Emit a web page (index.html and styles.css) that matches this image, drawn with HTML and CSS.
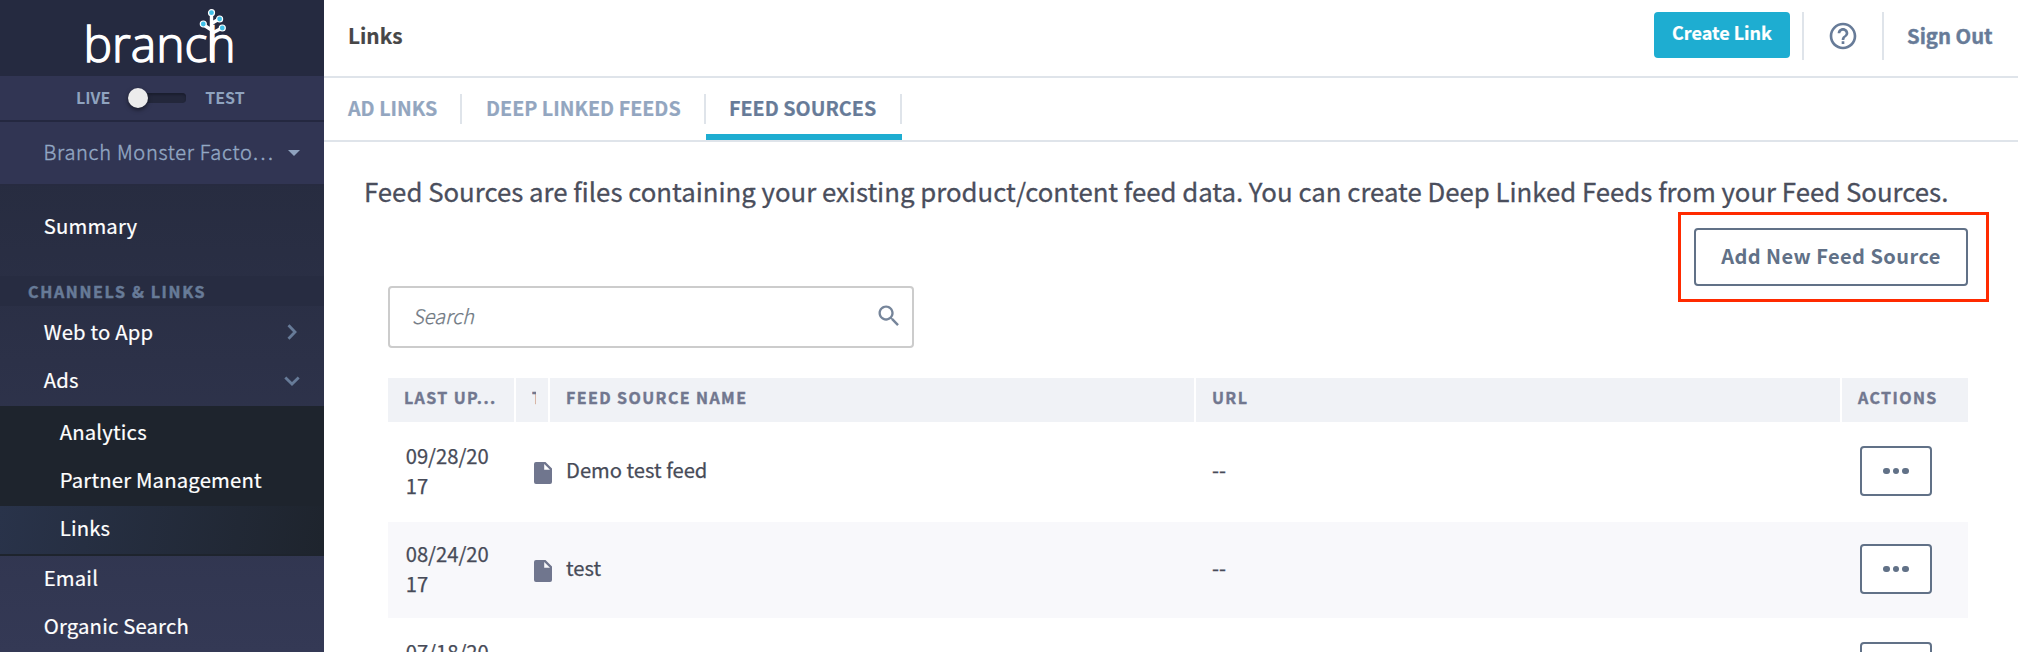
FILE: index.html
```
<!DOCTYPE html>
<html lang="en">
<head>
<meta charset="utf-8">
<title>Links</title>
<link rel="stylesheet" href="styles.css">
</head>
<body>
<div class="app">
  <aside class="sidebar">
    <div class="brand">
      <span class="brand-name">branch</span>
      <svg class="brand-tree" width="30" height="60" viewBox="0 0 30 60">
        <path d="M13.500 53V6M13.500 22L5 16.500M13.500 15.500L21 11M13.500 25.500L24 20" fill="none" stroke="#fff" stroke-width="3.400"/>
        <g fill="#3fc0e8" stroke="#fff" stroke-width="1.200"><circle cx="13.500" cy="4.700" r="3"/><circle cx="21.600" cy="11" r="3"/><circle cx="5.300" cy="16" r="3"/><circle cx="24.300" cy="20" r="3"/></g>
      </svg>
    </div>
    <div class="mode">
      <span class="mode-label">LIVE</span>
      <span class="toggle"><span class="knob"></span></span>
      <span class="mode-label">TEST</span>
    </div>
    <div class="account"><span class="account-name">Branch Monster Facto…</span><span class="caret"></span></div>
    <nav class="nav">
      <div class="item summary">Summary</div>
      <div class="section">CHANNELS &amp; LINKS</div>
      <div class="group">
        <div class="item">Web to App
          <svg class="chev" width="18" height="18" viewBox="0 0 18 18"><path d="M5.500 2.300L12 9L5.500 15.700"/></svg></div>
        <div class="item">Ads
          <svg class="chev" width="18" height="18" viewBox="0 0 18 18"><path d="M2.300 6.500L9 13L15.700 6.500"/></svg></div>
      </div>
      <div class="sub">
        <div class="item">Analytics</div>
        <div class="item">Partner Management</div>
        <div class="item active">Links</div>
      </div>
      <div class="item">Email</div>
      <div class="item">Organic Search</div>
    </nav>
  </aside>
  <main class="main">
    <header class="topbar">
      <h1 class="title">Links</h1>
      <div class="actions">
        <button class="create">Create Link</button>
        <div class="help"><svg width="32" height="32" viewBox="0 0 24 24"><path fill="#677b98" d="M11 18h2v-2h-2v2zm1-16C6.480 2 2 6.480 2 12s4.480 10 10 10 10-4.480 10-10S17.520 2 12 2zm0 18c-4.410 0-8-3.590-8-8s3.590-8 8-8 8 3.590 8 8-3.590 8-8 8zm0-14c-2.210 0-4 1.790-4 4h2c0-1.100.9-2 2-2s2 .9 2 2c0 2-3 1.750-3 5h2c0-2.250 3-2.500 3-5 0-2.210-1.790-4-4-4z"/></svg></div>
        <a class="signout">Sign Out</a>
      </div>
    </header>
    <nav class="tabs">
      <a class="tab tab-ad">AD LINKS</a>
      <a class="tab tab-deep">DEEP LINKED FEEDS</a>
      <a class="tab tab-feed">FEED SOURCES</a>
    </nav>
    <section class="content">
      <p class="intro">Feed Sources are files containing your existing product/content feed data. You can create Deep Linked Feeds from your Feed Sources.</p>
      <div class="highlight"><button class="add">Add New Feed Source</button></div>
      <div class="search"><span class="placeholder">Search</span>
        <svg width="28" height="28" viewBox="0 0 24 24"><path fill="#76859a" d="M15.500 14h-.79l-.28-.27C15.410 12.590 16 11.110 16 9.500 16 5.910 13.090 3 9.500 3S3 5.910 3 9.500 5.910 16 9.500 16c1.610 0 3.090-.59 4.230-1.570l.27.28v.79l5 4.990L20.490 19l-4.990-5zm-6 0C7.010 14 5 11.990 5 9.500S7.010 5 9.500 5 14 7.010 14 9.500 11.990 14 9.500 14z"/></svg>
      </div>
      <div class="table">
        <div class="row head">
          <div class="cell">LAST UP...</div><div class="cell"><span class="clip">T</span></div>
          <div class="cell">FEED SOURCE NAME</div><div class="cell">URL</div><div class="cell">ACTIONS</div>
        </div>
        <div class="row">
          <div class="date">09/28/20<br>17</div>
          <div class="file"><svg width="18" height="22" viewBox="0 0 18 22"><path fill="#70768e" fill-rule="evenodd" d="M2 0h9.500L18 6.500V20a2 2 0 0 1-2 2H2a2 2 0 0 1-2-2V2a2 2 0 0 1 2-2zM10.200 2v5.800H16z"/></svg></div>
          <div class="name">Demo test feed</div><div class="url">--</div>
          <div class="act"><button class="more"><i></i><i></i><i></i></button></div>
        </div>
        <div class="row alt">
          <div class="date">08/24/20<br>17</div>
          <div class="file"><svg width="18" height="22" viewBox="0 0 18 22"><path fill="#70768e" fill-rule="evenodd" d="M2 0h9.500L18 6.500V20a2 2 0 0 1-2 2H2a2 2 0 0 1-2-2V2a2 2 0 0 1 2-2zM10.200 2v5.800H16z"/></svg></div>
          <div class="name">test</div><div class="url">--</div>
          <div class="act"><button class="more"><i></i><i></i><i></i></button></div>
        </div>
        <div class="row">
          <div class="date">07/18/20</div>
          <div class="file"></div><div class="name"></div><div class="url"></div>
          <div class="act"><button class="more"><i></i><i></i><i></i></button></div>
        </div>
      </div>
    </section>
  </main>
</div>
</body>
</html>
```
FILE: styles.css
```
* { box-sizing: border-box; }
html, body { margin: 0; height: 652px; overflow: hidden; }
body { background: #fff; color: #474b58; font-family: "Noto Sans CJK SC", "Open Sans", sans-serif; font-size: 20px; }
button { font-family: inherit; margin: 0; padding: 0; }
.app { display: flex; height: 652px; overflow: hidden; }

.sidebar { width: 324px; flex: none; background: linear-gradient(180deg, #272c40 180px, #343955 652px); color: #fff; }
.brand { position: relative; height: 76px; background: #252a40; padding-left: 83.5px; }
.brand-name { font-family: "Open Sans", sans-serif; font-weight: 300; font-size: 48px; line-height: 88px; -webkit-text-stroke: 1.4px #fff; }
.brand-tree { position: absolute; left: 198px; top: 8px; }
.mode { display: flex; align-items: center; height: 46px; background: #313553; border-bottom: 2px solid #242840; padding-left: 76px; }
.mode-label { padding-bottom: 2px; font-size: 16px; font-weight: 700; color: #8fa3bf; }
.toggle { width: 58px; height: 10px; margin: 0 19px 0 18px; border-radius: 4px; background: #23273b; box-shadow: inset 0 2px 2px #1b1e2f; }
.knob { display: block; width: 20px; height: 20px; margin-top: -5px; border-radius: 50%; background: #ececec; box-shadow: 0 2px 4px rgba(0,0,0,.5); }
.account { display: flex; align-items: center; height: 64px; background: #313553; border-bottom: 2px solid #272b40; padding-left: 43.5px; }
.account-name { padding-bottom: 3px; font-size: 20px; font-weight: 300; color: #93a8c4; letter-spacing: .7px; -webkit-text-stroke: .4px #93a8c4; }
.caret { margin-left: 14px; border: 6px solid transparent; border-top-color: #8fa3bf; border-bottom: 0; }
.nav { padding-top: 18px; }
.item { display: flex; align-items: center; justify-content: space-between; height: 48px; line-height: 43px; padding: 0 23px 5px 43.7px; font-size: 20.3px; letter-spacing: .18px; -webkit-text-stroke: .2px #fff; }
.summary { margin-bottom: 24px; }
.section { height: 30px; line-height: 30px; padding-left: 28px; background: #272c41; color: #677b98; font-size: 16px; font-weight: 700; letter-spacing: 1.65px; -webkit-text-stroke: .5px #677b98; }
.group { padding-top: 4px; }
.chev { fill: none; stroke: #677b98; stroke-width: 2.8; }
.sub { padding-top: 4px; background: #1e242d; border-bottom: 2px solid #1e242d; }
.sub .item { padding-left: 59.7px; }
.active { background: linear-gradient(100deg, #29334a, #1e242d); }

.main { flex: 1; min-width: 0; }
.topbar { display: flex; justify-content: space-between; height: 78px; border-bottom: 2px solid #dfe4ea; padding: 12px 26px 0 24px; }
.title { margin: 0; font-size: 20.8px; line-height: 46px; color: #474747; -webkit-text-stroke: .2px #474747; }
.actions { display: flex; }
.create { width: 136px; height: 46px; border: 0; border-radius: 4px; background: #1eadd1; color: #fff; font-size: 18px; font-weight: 700; padding-bottom: 6px; -webkit-text-stroke: .2px #fff; }
.help { display: flex; justify-content: center; align-items: center; width: 82px; height: 48px; margin-left: 12px; border: solid #dfe4ea; border-width: 0 2px; }
.signout { width: 85px; margin-left: 23px; color: #677b98; font-size: 20.3px; font-weight: 700; line-height: 47px; white-space: nowrap; -webkit-text-stroke: .4px #677b98; }
.tabs { display: flex; height: 64px; border-bottom: 2px solid #dfe4ea; padding-left: 24px; }
.tab { position: relative; height: 62px; line-height: 60px; font-size: 19.7px; font-weight: 700; color: #93a6c0; -webkit-text-stroke: .2px; }
.tab::after { content: ""; position: absolute; right: 0; top: 16px; width: 2px; height: 30px; background: #dfe4ea; }
.tab-ad { width: 114px; padding-left: 0; }
.tab-deep { width: 244px; padding-left: 24px; }
.tab-feed { width: 196px; padding-left: 23px; color: #677b98; border-bottom: 6px solid #1eadd1; }

.content { padding: 0 50px 0 64px; }
.intro { margin: 0 -40px 0 -24px; height: 70px; line-height: 98px; font-size: 25.78px; color: #4a4e5c; white-space: nowrap; -webkit-text-stroke: .3px #4a4e5c; }
.highlight { width: 311px; height: 90px; margin: 0 -21px 0 auto; border: 3px solid #ff2a00; padding: 13px; }
.add { width: 274px; height: 58px; border: 2px solid #617187; border-radius: 4px; background: #fff; color: #617187; font-size: 20px; font-weight: 700; letter-spacing: .45px; padding-bottom: 4px; }
.search { display: flex; justify-content: space-between; align-items: center; width: 526px; height: 62px; margin-top: -16px; border: 2px solid #ccc; border-radius: 4px; padding: 0 9px 2px 22px; }
.placeholder { padding-bottom: 2px; font-size: 20px; font-style: italic; font-weight: 300; color: #6f7882; -webkit-text-stroke: .25px #6f7882; }
.table { margin-top: 30px; font-size: 20.2px; -webkit-text-stroke: .25px; }
.row { display: grid; grid-template-columns: 126px 32px 644px 644px 126px; column-gap: 2px; height: 98px; border-bottom: 2px solid #fff; }
.head { height: 46px; font-size: 16px; font-weight: 700; letter-spacing: 1.4px; color: #71778f; line-height: 38px; -webkit-text-stroke: .4px #71778f; }
.cell { background: #f0f2f6; padding-left: 16px; white-space: nowrap; }
.clip { display: block; width: 4px; overflow: hidden; }
.alt { background: #f8f8fb; }
.date { padding: 17px 0 0 17.7px; line-height: 30px; }
.file { padding: 38px 0 0 18px; }
.file svg { display: block; }
.name, .url { padding-left: 16px; line-height: 92px; }
.act { padding: 22px 0 0 18px; }
.more { display: flex; justify-content: center; align-items: center; gap: 2.7px; width: 72px; height: 50px; border: 2px solid #617187; border-radius: 4px; background: #fff; }
.more i { width: 6.8px; height: 6.8px; border-radius: 50%; background: #617187; }
```
